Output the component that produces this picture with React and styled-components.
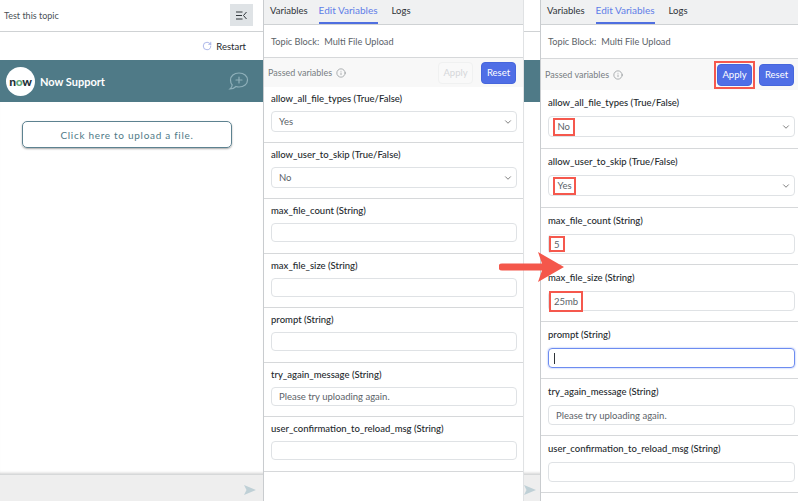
import React from 'react';
import styled, { createGlobalStyle } from 'styled-components';
import { ChevronDown, Info, RotateCw } from 'lucide-react';

const GlobalStyle = createGlobalStyle`
  html, body {
    margin: 0;
    height: 100%;
    overflow: hidden;
    background: #fff;
    font-family: Lato, "Noto Sans", sans-serif;
    color: #2e3338;
  }
  * { box-sizing: border-box; }
`;

const beforeFields = [
  { label: 'allow_all_file_types (True/False)', value: 'Yes', select: true },
  { label: 'allow_user_to_skip (True/False)', value: 'No', select: true },
  { label: 'max_file_count (String)' },
  { label: 'max_file_size (String)' },
  { label: 'prompt (String)' },
  { label: 'try_again_message (String)', value: 'Please try uploading again.' },
  { label: 'user_confirmation_to_reload_msg (String)' },
];

const afterFields = [
  { label: 'allow_all_file_types (True/False)', value: 'No', select: true, marked: true },
  { label: 'allow_user_to_skip (True/False)', value: 'Yes', select: true, marked: true },
  { label: 'max_file_count (String)', value: '5', marked: true },
  { label: 'max_file_size (String)', value: '25mb', marked: true },
  { label: 'prompt (String)', focused: true },
  { label: 'try_again_message (String)', value: 'Please try uploading again.' },
  { label: 'user_confirmation_to_reload_msg (String)' },
];

const Page = styled.div`
  position: relative;
  display: grid;
  grid-template-columns: 263px 261px 16px 258px;
  width: 798px;
  height: 501px;
  overflow: hidden;
`;

const Chat = styled.section`
  display: flex;
  flex-direction: column;
  height: 501px;
  min-width: 0;
  overflow: hidden;
`;

const ChatHeader = styled.header`
  display: flex;
  align-items: center;
  justify-content: space-between;
  height: 32px;
  padding: 0 10px 1px 4px;
  border-bottom: 1px solid #cfd2d4;
  font-size: 9px;
  color: #4b5257;
`;

const CollapseButton = styled.div`
  display: flex;
  align-items: center;
  justify-content: center;
  width: 23px;
  height: 22px;
  background: #dfe3e6;
`;

const RestartRow = styled.div`
  display: flex;
  align-items: center;
  justify-content: flex-end;
  gap: 4px;
  height: 28px;
  padding-right: 17px;
  font-size: 9.5px;
  color: #24292d;
`;

const Band = styled.div`
  display: flex;
  align-items: center;
  height: 42px;
  padding: 0 14px 0 6px;
  background: #4f7a87;
  color: #fff;
`;

const LogoCircle = styled.div`
  display: flex;
  align-items: center;
  justify-content: center;
  width: 29px;
  height: 29px;
  border-radius: 50%;
  background: #fff;
  color: #1f3037;
  font-size: 12px;
  font-weight: 900;
  letter-spacing: -0.3px;
`;

const LogoO = styled.span`
  color: #62a87c;
`;

const BandTitle = styled.div`
  flex: 1;
  margin-left: 5px;
  font-size: 11px;
  font-weight: 700;
`;

const ChatBody = styled.div`
  flex: 1;
  padding: 19px 0 0 22px;
  box-shadow: inset 0 -3px 3px -2px rgba(0, 0, 0, 0.18);
`;

const UploadButton = styled.div`
  display: flex;
  align-items: center;
  justify-content: center;
  width: 210px;
  height: 27px;
  border: 1px solid #5d8290;
  border-radius: 5px;
  box-shadow: 0 1px 2px rgba(0, 0, 0, 0.35);
  font-size: 10px;
  letter-spacing: 0.7px;
  color: #4f7a87;
`;

const ChatFooter = styled.footer`
  display: flex;
  align-items: center;
  justify-content: flex-end;
  height: 27px;
  padding: 3px 7px 0 0;
  background: #eeeeee;
  border-top: 1px solid #d6d8d9;
`;

const EdgeFooter = styled(ChatFooter)`
  justify-content: flex-start;
  padding: 3px 0 0 0;
`;

const Panel = styled.section`
  display: flex;
  flex-direction: column;
  height: 501px;
  min-width: 0;
  overflow: hidden;
  background: #fff;
  border-left: 1.5px solid #c9cccf;
  border-right: ${({ $edge }) => ($edge ? '1px solid #e0e2e4' : 'none')};
`;

const Tabs = styled.nav`
  display: flex;
  gap: 11px;
  height: 25px;
  padding-left: 6px;
  background: #f0f1f2;
  border-bottom: 1px solid #cfd2d4;
`;

const Tab = styled.div`
  display: flex;
  align-items: center;
  height: 24px;
  padding-bottom: 2px;
  margin-right: ${({ $active }) => ($active ? 3 : 0)}px;
  font-size: ${({ $active }) => ($active ? 10 : 9.5)}px;
  color: ${({ $active }) => ($active ? '#5f7ee8' : '#2e3338')};
  border-bottom: 2px solid ${({ $active }) => ($active ? '#4f6fe0' : 'transparent')};
`;

const TopicRow = styled.div`
  display: flex;
  align-items: center;
  gap: 5px;
  height: ${({ $h }) => $h}px;
  padding-left: 7px;
  font-size: 9.2px;
  color: #5b6268;
  border-bottom: 1px solid #d6d8da;
`;

const PassedRow = styled.div`
  display: flex;
  align-items: center;
  gap: ${({ $gap }) => $gap}px;
  height: ${({ $h }) => $h}px;
  padding: 0 ${({ $right }) => $right}px 0 4px;
  background: #f8f8f8;
  font-size: 9px;
  color: #777d82;
`;

const PassedLabel = styled.div`
  display: flex;
  align-items: center;
  gap: 4px;
  margin-right: auto;
`;

const Button = styled.div`
  display: flex;
  align-items: center;
  justify-content: center;
  width: 35px;
  height: 22px;
  border-radius: 4px;
  font-size: 9.5px;
  background: ${({ $off }) => ($off ? '#f9f9f9' : '#4f6ee6')};
  color: ${({ $off }) => ($off ? '#d5d7d9' : '#fff')};
  border: 1px solid ${({ $off }) => ($off ? '#f0f1f1' : '#4666dc')};
`;

const ButtonMark = styled.div`
  display: flex;
  padding: 1px;
  border: 2px solid #f5584d;
`;

const Field = styled.div`
  padding: ${({ $top }) => $top}px 7px ${({ $bottom }) => $bottom}px 7px;
  border-bottom: 1px solid #d6d8da;
`;

const FieldLabel = styled.div`
  height: 13px;
  line-height: 12px;
  margin-bottom: ${({ $gap }) => $gap}px;
  font-size: 9.5px;
  font-weight: 500;
  color: #24292d;
  white-space: nowrap;
`;

const Control = styled.div`
  display: flex;
  align-items: center;
  justify-content: space-between;
  width: ${({ $w }) => $w}px;
  height: ${({ $h }) => $h}px;
  padding: 0 3px 0 ${({ $marked }) => ($marked ? 3 : 7)}px;
  border-radius: 4px;
  font-size: 9.5px;
  color: #5b6268;
  border: 1px solid ${({ $focused }) => ($focused ? '#6d8cf0' : '#dfe2e5')};
  box-shadow: ${({ $focused }) => ($focused ? '0 0 2px #8ea6f5' : 'none')};
`;

const ValueMark = styled.span`
  display: flex;
  align-items: center;
  height: ${({ $h }) => $h}px;
  padding: 0 ${({ $select }) => ($select ? 2.5 : 3)}px;
  margin-left: ${({ $select }) => ($select ? 1 : -3)}px;
  border: 2px solid #f5584d;
`;

const Caret = styled.span`
  width: 1px;
  height: 11px;
  margin-left: -2px;
  background: #2e3338;
`;

const Arrow = styled.svg`
  position: absolute;
  left: 499px;
  top: 251px;
`;

const Grow = styled.div`
  flex: 1;
`;

const CollapseIcon = () => (
  <svg width="11" height="9" viewBox="0 0 11 9" fill="none" stroke="#30363b" strokeWidth="1">
    <path d="M0 1h6.500M0 4.500h6M0 8h6.500M10.500 1 7.500 4.500l3 3.500" />
  </svg>
);

const NewChatIcon = () => (
  <svg width="22" height="20" viewBox="0 0 22 20" fill="none" stroke="#8fb0ba" strokeWidth="1.2">
    <path d="M12 2c5 0 8.500 3 8.500 7s-3.500 7-8.500 7c-1 0-2-.2-3-.5C7.500 17 5.500 18 3 18c1.200-1 2-2.400 2.200-4C4 12.800 3.500 11 3.500 9 3.500 5 7 2 12 2Z" />
    <path d="M12 6v6M9 9h6" strokeLinecap="round" />
  </svg>
);

const SendIcon = () => (
  <svg width="12" height="10" viewBox="0 0 12 10">
    <path d="M0 0 12 5 0 10l2.500-5Z" fill="#bfd0d6" />
  </svg>
);

const ChatEdge = () => (
  <Chat>
    <ChatHeader />
    <RestartRow />
    <Band />
    <ChatBody />
    <EdgeFooter>
      <SendIcon />
    </EdgeFooter>
  </Chat>
);

const VariablesPanel = ({ fields, edge, applied, m }) => (
  <Panel $edge={edge}>
    <Tabs>
      <Tab>Variables</Tab>
      <Tab $active>Edit Variables</Tab>
      <Tab>Logs</Tab>
    </Tabs>
    <TopicRow $h={m.topic}>
      <span>Topic Block:</span>
      <span>Multi File Upload</span>
    </TopicRow>
    <PassedRow $h={m.passed} $right={m.passedRight} $gap={m.passedGap}>
      <PassedLabel>
        Passed variables
        <Info size={10} strokeWidth={1.4} />
      </PassedLabel>
      {applied ? (
        <ButtonMark>
          <Button>Apply</Button>
        </ButtonMark>
      ) : (
        <Button $off>Apply</Button>
      )}
      <Button>Reset</Button>
    </PassedRow>
    {fields.map((field) => (
      <Field
        key={field.label}
        $top={m.top}
        $bottom={field.select ? m.selectBottom : m.inputBottom}
      >
        <FieldLabel $gap={m.gap}>{field.label}</FieldLabel>
        <Control
          $w={m.width}
          $h={field.select ? 21 : m.input}
          $marked={field.marked}
          $focused={field.focused}
        >
          {field.marked ? (
            <ValueMark $select={field.select} $h={field.select ? 18 : field.value === '5' ? 16 : 21}>
              {field.value}
            </ValueMark>
          ) : (
            <span>{field.value}</span>
          )}
          {field.focused && <Caret />}
          {field.focused && <Grow />}
          {field.select && <ChevronDown size={10} color="#666" />}
        </Control>
      </Field>
    ))}
  </Panel>
);

const App = () => (
  <Page>
    <GlobalStyle />
    <Chat>
      <ChatHeader>
        Test this topic
        <CollapseButton>
          <CollapseIcon />
        </CollapseButton>
      </ChatHeader>
      <RestartRow>
        <RotateCw size={10} color="#6c7fd8" strokeWidth={1.3} />
        Restart
      </RestartRow>
      <Band>
        <LogoCircle>
          n<LogoO>o</LogoO>w
        </LogoCircle>
        <BandTitle>Now Support</BandTitle>
        <NewChatIcon />
      </Band>
      <ChatBody>
        <UploadButton>Click here to upload a file.</UploadButton>
      </ChatBody>
      <ChatFooter>
        <SendIcon />
      </ChatFooter>
    </Chat>
    <VariablesPanel
      fields={beforeFields}
      edge
      m={{ topic: 33, passed: 29, passedRight: 7, passedGap: 8, top: 6, gap: 5, input: 19, width: 246, selectBottom: 10, inputBottom: 10.5 }}
    />
    <ChatEdge />
    <VariablesPanel
      fields={afterFields}
      applied
      m={{ topic: 34, passed: 31, passedRight: 4, passedGap: 4, top: 7, gap: 6, input: 20, width: 247, selectBottom: 11, inputBottom: 10 }}
    />
    <Arrow width="66" height="32" viewBox="0 0 66 32">
      <path d="M3 12.500h40L39 1l26 15-26 15 4-11.500H3a3.500 3.500 0 0 1 0-7Z" fill="#f4574b" />
    </Arrow>
  </Page>
);

export default App;
